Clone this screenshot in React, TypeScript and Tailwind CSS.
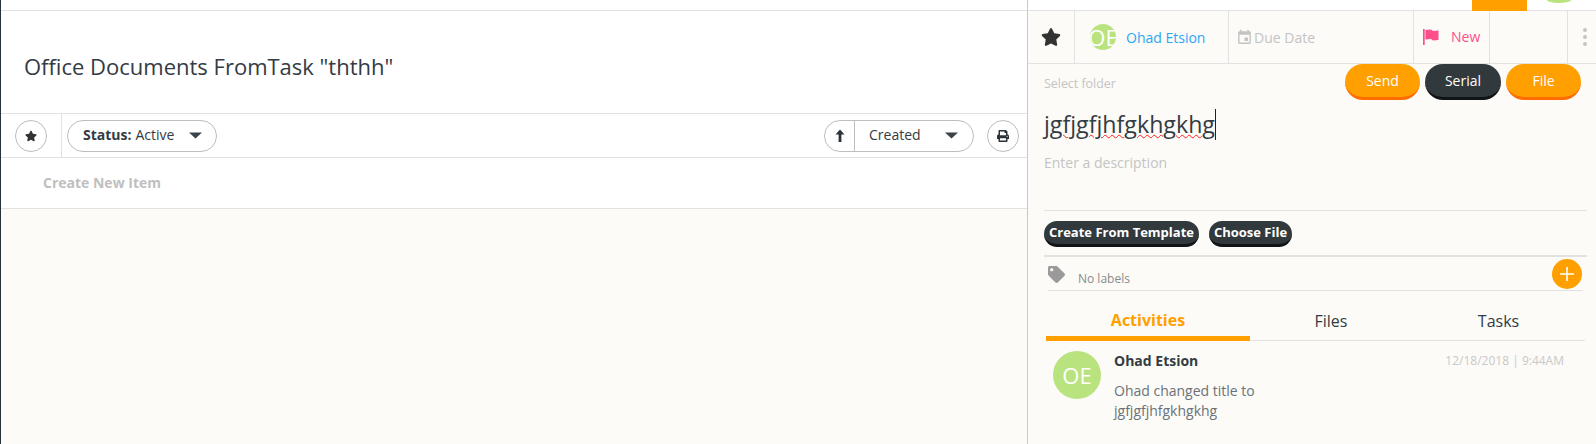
import { FaStar, FaPrint, FaTag } from "react-icons/fa";
import { MdEvent } from "react-icons/md";

const Caret = () => (
  <svg width="14" height="8" viewBox="0 0 14 8" className="block">
    <path d="M0 1.5 H13 L6.5 7.5 Z" fill="#3b4247" />
  </svg>
);

const PillButton = ({ label, w, dark }: { label: string; w: string; dark?: boolean }) => (
  <div
    className={`${w} ${
      dark ? "bg-[#32393d] border-[#101416]" : "bg-[#ffa000] border-[#ff6d00]"
    } h-[36px] rounded-[18px] border-b-[3px] flex items-center justify-center text-[14px] text-white`}
  >
    {label}
  </div>
);

const SmallDark = ({ label, w }: { label: string; w: string }) => (
  <div
    className={`${w} h-[26px] rounded-[13px] bg-[#32393d] border-b-[3px] border-[#101416] flex items-center justify-center pt-[1px] text-[13px] font-bold text-white`}
  >
    {label}
  </div>
);

export default function App() {
  return (
    <div
      className="w-[1596px] h-[444px] overflow-hidden flex bg-[#fcfbf7] text-[#333b44]"
      style={{ fontFamily: '"Open Sans", sans-serif' }}
    >
      <div className="w-[1px] h-[444px] bg-[#24323a]" />
      {/* Left panel */}
      <div className="w-[1026px] flex flex-col">
        <div className="h-[11px] bg-white border-b border-[#e2e2e2]" />
        <div className="h-[103px] bg-white border-b border-[#e2e2e2] flex items-center pl-[23px] text-[22px] leading-[30px] pt-[7px]">
          Office Documents FromTask "ththh"
        </div>
        <div className="h-[44px] bg-white border-b border-[#e2e2e2] flex items-center">
          <div className="w-[61px] h-full border-r border-[#e2e2e2] flex items-center pl-[14px] shrink-0">
            <div className="w-[32px] h-[32px] rounded-full border border-[#bdbdbd] flex items-center justify-center">
              <FaStar className="text-[#333] text-[12px]" />
            </div>
          </div>
          <div className="ml-[5px] w-[150px] h-[32px] rounded-full border border-[#bdbdbd] flex items-center pl-[15px] pb-[2px] text-[14px]">
            <span className="font-bold mr-[4px]">Status:</span>
            <span>Active</span>
            <span className="ml-[15px]"><Caret /></span>
          </div>
          <div className="ml-auto w-[150px] h-[32px] rounded-full border border-[#bdbdbd] flex items-center text-[14px]">
            <div className="w-[30px] h-full border-r border-[#bdbdbd] flex items-center justify-center">
              <svg width="10" height="13" viewBox="0 0 10 13">
                <path d="M5 0.5 L9.5 5.5 H6.4 V13 H3.6 V5.5 H0.5 Z" fill="#2b3338" />
              </svg>
            </div>
            <span className="ml-[14px] -mt-[2px]">Created</span>
            <span className="ml-auto mr-[14px] -mt-[2px]"><Caret /></span>
          </div>
          <div className="ml-[13px] mr-[8px] w-[32px] h-[32px] rounded-full border border-[#bdbdbd] flex items-center justify-center">
            <FaPrint className="text-[#2b3338] text-[12px]" />
          </div>
        </div>
        <div className="h-[51px] bg-white border-b border-[#e2e2e2] flex items-center pl-[42px] pb-[2px] text-[14px] font-bold text-[#bfbfbf]">
          Create New Item
        </div>
      </div>
      {/* Right panel */}
      <div className="w-[569px] border-l border-[#c8c8c8] flex flex-col">
        <div className="h-[11px] bg-white border-b border-[#e2e2e2] flex">
          <div className="ml-[444px] w-[55px] h-[11px] bg-[#ffa000]" />
          <div className="ml-[20px] w-[24px] h-[3px] rounded-[0_0_50%_50%/0_0_100%_100%] bg-[#b9e37f]" />
        </div>
        <div className="h-[53px] border-b border-[#e2e2e2] flex">
          <div className="w-[47px] border-r border-[#e2e2e2] flex items-center justify-center shrink-0">
            <FaStar className="text-[#333] text-[20px]" />
          </div>
          <div className="w-[154px] border-r border-[#e2e2e2] flex items-center pl-[15px] shrink-0">
            <div className="w-[26px] h-[26px] rounded-full overflow-hidden bg-[#b9e37f] flex items-center justify-center text-white text-[22px] shrink-0">
              OE
            </div>
            <span className="ml-[10px] text-[14px] text-[#2aa8f5]">Ohad Etsion</span>
          </div>
          <div className="w-[185px] border-r border-[#e2e2e2] flex items-center pl-[7px] text-[14px] text-[#c4c4c4] shrink-0">
            <MdEvent className="text-[17px] mr-[1px]" />
            <span>Due Date</span>
          </div>
          <div className="w-[76px] border-r border-[#e2e2e2] flex items-center pl-[9px] text-[14px] text-[#ff4f8b] shrink-0">
            <svg width="16" height="16" viewBox="0 0 16 16" className="shrink-0">
              <path d="M0 0 H1.7 V16 H0 Z M2.4 1 L8 0.5 L10 2 L15.5 1.5 V11 L10 11.5 L8 10 L2.4 10.5 Z" fill="#ff4f8b" />
            </svg>
            <span className="ml-[12px] -mt-[1px]">New</span>
          </div>
          <div className="w-[78px] border-r border-[#e2e2e2] shrink-0" />
          <div className="flex-1 flex flex-col items-center justify-center gap-[3px] pr-[1px] pl-[6px]">
            <span className="w-[4px] h-[4px] rounded-full bg-[#c4c4c4]" />
            <span className="w-[4px] h-[4px] rounded-full bg-[#c4c4c4]" />
            <span className="w-[4px] h-[4px] rounded-full bg-[#c4c4c4]" />
          </div>
        </div>
        <div className="flex flex-col pl-[16px] pr-[9px]">
          <div className="h-[36px] flex items-start">
            <span className="mt-[11px] text-[12.4px] leading-[18px] text-[#c4c4c4]">Select folder</span>
            <div className="ml-auto flex gap-[5px] mr-[6px]">
              <PillButton label="Send" w="w-[75px]" />
              <PillButton label="Serial" w="w-[76px]" dark />
              <PillButton label="File" w="w-[75px]" />
            </div>
          </div>
          <div className="mt-[8px] h-[32px] flex items-center text-[23.2px] leading-[32px] text-[#333b44]">
            <span className="underline decoration-wavy decoration-[#ff2020] decoration-1 underline-offset-[1px]">jgfjgfjhfgkhgkhg</span>
            <span className="w-[1px] h-[31px] bg-[#222]" />
          </div>
          <div className="mt-[13px] h-[20px] text-[14px] leading-[20px] text-[#c4c4c4]">Enter a description</div>
          <div className="mt-[37px] border-t border-[#e2e2e2]" />
          <div className="mt-[10px] flex gap-[10px]">
            <SmallDark label="Create From Template" w="w-[155px]" />
            <SmallDark label="Choose File" w="w-[83px]" />
          </div>
          <div className="mt-[8px] h-[2px] bg-[#e2e2e2]" />
          <div className="h-[34px] ml-[4px] mr-[4px] border-b border-[#e2e2e2] flex">
            <FaTag className="text-[#9a9a9a] text-[17px] mt-[9px]" />
            <span className="ml-[13px] mt-[13px] text-[12px] leading-[18px] text-[#8a8a8a]">No labels</span>
            <div className="ml-auto mr-[1px] mt-[2px] w-[30px] h-[30px] rounded-full bg-[#ffa000] flex items-center justify-center">
              <svg width="16" height="16" viewBox="0 0 16 16">
                <path d="M8 1 V15 M1 8 H15" stroke="#fff" strokeWidth="1.6" />
              </svg>
            </div>
          </div>
          <div className="mt-[14px] ml-[2px] mr-[2px] h-[36px] border-b border-[#e2e2e2] flex text-[16px] leading-[22px]">
            <div className="w-[204px] h-[36px] border-b-[5px] border-[#ffa000] text-center font-bold text-[#ffa000] pt-[4px]">Activities</div>
            <div className="w-[166px] text-center pt-[5px] pr-[4px]">Files</div>
            <div className="flex-1 text-center pt-[5px] pr-[4px]">Tasks</div>
          </div>
          <div className="flex ml-[9px] mt-[10px]">
            <div className="w-[48px] h-[48px] rounded-full bg-[#b9e37f] flex items-center justify-center text-white text-[22px] shrink-0">
              OE
            </div>
            <div className="ml-[13px] w-[200px] shrink-0">
              <div className="text-[14px] font-bold leading-[20px] text-[#333b44]">Ohad Etsion</div>
              <div className="mt-[10px] text-[14px] leading-[20px] text-[#6b7277]">
                Ohad changed title to
                <br />
                jgfjgfjhfgkhgkhg
              </div>
            </div>
            <div className="ml-auto mr-[23px] text-[12px] leading-[20px] text-[#c9c9c9]">12/18/2018 | 9:44AM</div>
          </div>
        </div>
      </div>
    </div>
  );
}
